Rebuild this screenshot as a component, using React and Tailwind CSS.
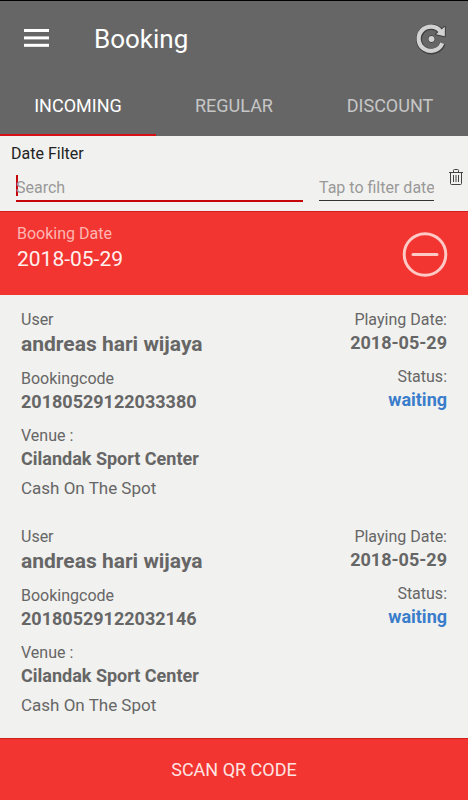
import { useState } from "react";

const TABS = ["INCOMING", "REGULAR", "DISCOUNT"];

const BOOKINGS = [
    {
        user: "andreas hari wijaya",
        code: "20180529122033380",
        venue: "Cilandak Sport Center",
        payment: "Cash On The Spot",
        playingDate: "2018-05-29",
        status: "waiting",
    },
    {
        user: "andreas hari wijaya",
        code: "20180529122032146",
        venue: "Cilandak Sport Center",
        payment: "Cash On The Spot",
        playingDate: "2018-05-29",
        status: "waiting",
    },
];

function MenuIcon() {
    return (
        <svg width="26" height="20" viewBox="0 0 26 20" fill="#fff" aria-hidden="true">
            <rect x="0" y="0" width="25" height="3" />
            <rect x="0" y="7.4" width="25" height="3" />
            <rect x="0" y="14.8" width="25" height="3" />
        </svg>
    );
}

function RefreshIcon() {
    return (
        <svg width="32" height="32" viewBox="0 0 32 32" fill="none" aria-hidden="true">
            {/* dark outline below, light shape on top */}
            <g stroke="#3f3f3f" fill="#3f3f3f">
                <path d="M27.6 20.6A12.2 12.2 0 1 1 25.6 8.4" strokeWidth="6" fill="none" />
                <path d="M29.8 3.8V13.2L21 11.2Z" strokeWidth="2" strokeLinejoin="round" />
                <circle cx="16.5" cy="16" r="3.3" />
            </g>
            <path d="M27.2 20.2A12.2 12.2 0 1 1 25.6 8.4" stroke="#d2d2d2" strokeWidth="4.2" />
            <path d="M29.8 3.8V13.2L21 11.2Z" fill="#d2d2d2" />
            <circle cx="16.5" cy="16" r="3" fill="#d2d2d2" />
        </svg>
    );
}

function TrashIcon() {
    return (
        <svg width="14" height="17" viewBox="0 0 14 17" fill="none" stroke="#444" aria-hidden="true">
            <path d="M0 3.5H14M4.5 3V1.5Q4.5 0.5 5.5 0.5H8.5Q9.5 0.5 9.5 1.5V3" />
            <path d="M1.5 4V14.5Q1.5 15.5 2.5 15.5H11.5Q12.5 15.5 12.5 14.5V4" />
            <path d="M4.5 6V13M7 6V13M9.5 6V13" />
        </svg>
    );
}

function MinusIcon() {
    return (
        <svg width="46" height="46" viewBox="0 0 46 46" fill="none" stroke="#ffc9c6" strokeWidth="3" aria-hidden="true">
            <circle cx="23" cy="23.5" r="20.8" />
            <path d="M11 23.5H35" strokeLinecap="round" />
        </svg>
    );
}

function BookingItem({ booking }) {
    return (
        <li className="flex justify-between pt-[13px] pr-[21px] pb-3 pl-[21px] text-[#666]">
            <div>
                <p className="text-base leading-6">User</p>
                <p className="text-[21px] leading-6 font-bold">{booking.user}</p>
                <p className="mt-[11px] text-base leading-6">Bookingcode</p>
                <p className="text-lg leading-[22px] font-bold">{booking.code}</p>
                <p className="mt-[11px] text-base leading-6">Venue :</p>
                <p className="text-lg leading-[22px] font-bold">{booking.venue}</p>
                <p className="mt-1.5 text-[17px] leading-6">{booking.payment}</p>
            </div>
            <div className="text-right">
                <p className="text-base leading-6">Playing Date:</p>
                <p className="text-lg leading-[22px] font-bold">{booking.playingDate}</p>
                <p className="mt-[11px] text-base leading-6">Status:</p>
                <p className="text-lg leading-[22px] font-bold text-[#3a7dcb]">{booking.status}</p>
            </div>
        </li>
    );
}

export default function App() {
    const [tab, setTab] = useState("INCOMING");
    const [search, setSearch] = useState("");
    const [date, setDate] = useState("");
    const [open, setOpen] = useState(true);

    return (
        <div className="flex min-h-screen flex-col bg-[#f1f1ef] font-[Roboto,sans-serif]">
            <header className="border-t border-black bg-[#666]">
                <div className="flex h-[75px] items-center pr-[21px] pl-6">
                    <button type="button" aria-label="Menu">
                        <MenuIcon />
                    </button>
                    <h1 className="ml-11 text-[26px] leading-8 text-white">Booking</h1>
                    <button type="button" aria-label="Refresh" className="ml-auto">
                        <RefreshIcon />
                    </button>
                </div>
                <nav className="grid grid-cols-3">
                    {TABS.map((name) => (
                        <button
                            key={name}
                            type="button"
                            onClick={() => setTab(name)}
                            className={
                                tab === name
                                    ? "h-[60px] border-b-2 border-[#d50f14] pt-0.5 text-lg text-white"
                                    : "h-[60px] border-b-2 border-transparent pt-0.5 text-lg text-[#c6c6c6]"
                            }
                        >
                            {name}
                        </button>
                    ))}
                </nav>
            </header>

            {/* Filter */}
            <section className="h-[75px] pt-1.5 pl-[11px]">
                <h2 className="text-base leading-6 text-[#222]">Date Filter</h2>
                <div className="flex pr-[5px] pl-[5px]">
                    <div className="flex h-9 flex-1 items-end border-b-2 border-[#c4060b]">
                        <span className="mb-1 h-[21px] w-0.5 bg-[#c4060b]" />
                        <input
                            type="text"
                            aria-label="Search"
                            placeholder="Search"
                            value={search}
                            onChange={(e) => setSearch(e.target.value)}
                            className="-ml-0.5 h-6 w-full text-base text-[#222] outline-none placeholder:text-[#999]"
                        />
                    </div>
                    <input
                        type="text"
                        aria-label="Tap to filter date"
                        placeholder="Tap to filter date"
                        value={date}
                        onChange={(e) => setDate(e.target.value)}
                        className="ml-4 h-[35px] w-[115px] border-b border-[#333] pt-2 text-base text-[#222] outline-none placeholder:text-[#999]"
                    />
                    <button type="button" aria-label="Clear filter" className="ml-[15px] self-start pt-[3px]" onClick={() => setDate("")}>
                        <TrashIcon />
                    </button>
                </div>
            </section>

            {/* Booking group */}
            <section>
                <div className="flex h-[84px] items-center justify-between border-t border-[#cf1f1c] bg-[#f23531] pr-[20px] pl-[17px]">
                    <div className="-mt-3.5">
                        <p className="text-base leading-6 text-[#ffb5b2]">Booking Date</p>
                        <p className="text-[21px] leading-[26px] text-[#fff0ef]">2018-05-29</p>
                    </div>
                    <button type="button" aria-label="Collapse" aria-expanded={open} onClick={() => setOpen(!open)}>
                        <MinusIcon />
                    </button>
                </div>
                {open && (
                    <ul>
                        {BOOKINGS.map((b) => (
                            <BookingItem key={b.code} booking={b} />
                        ))}
                    </ul>
                )}
            </section>

            <button type="button" className="mt-auto h-[62px] border-t border-[#cf1f1c] bg-[#f23531] text-lg text-[#ffe3e1]">
                SCAN QR CODE
            </button>
        </div>
    );
}
